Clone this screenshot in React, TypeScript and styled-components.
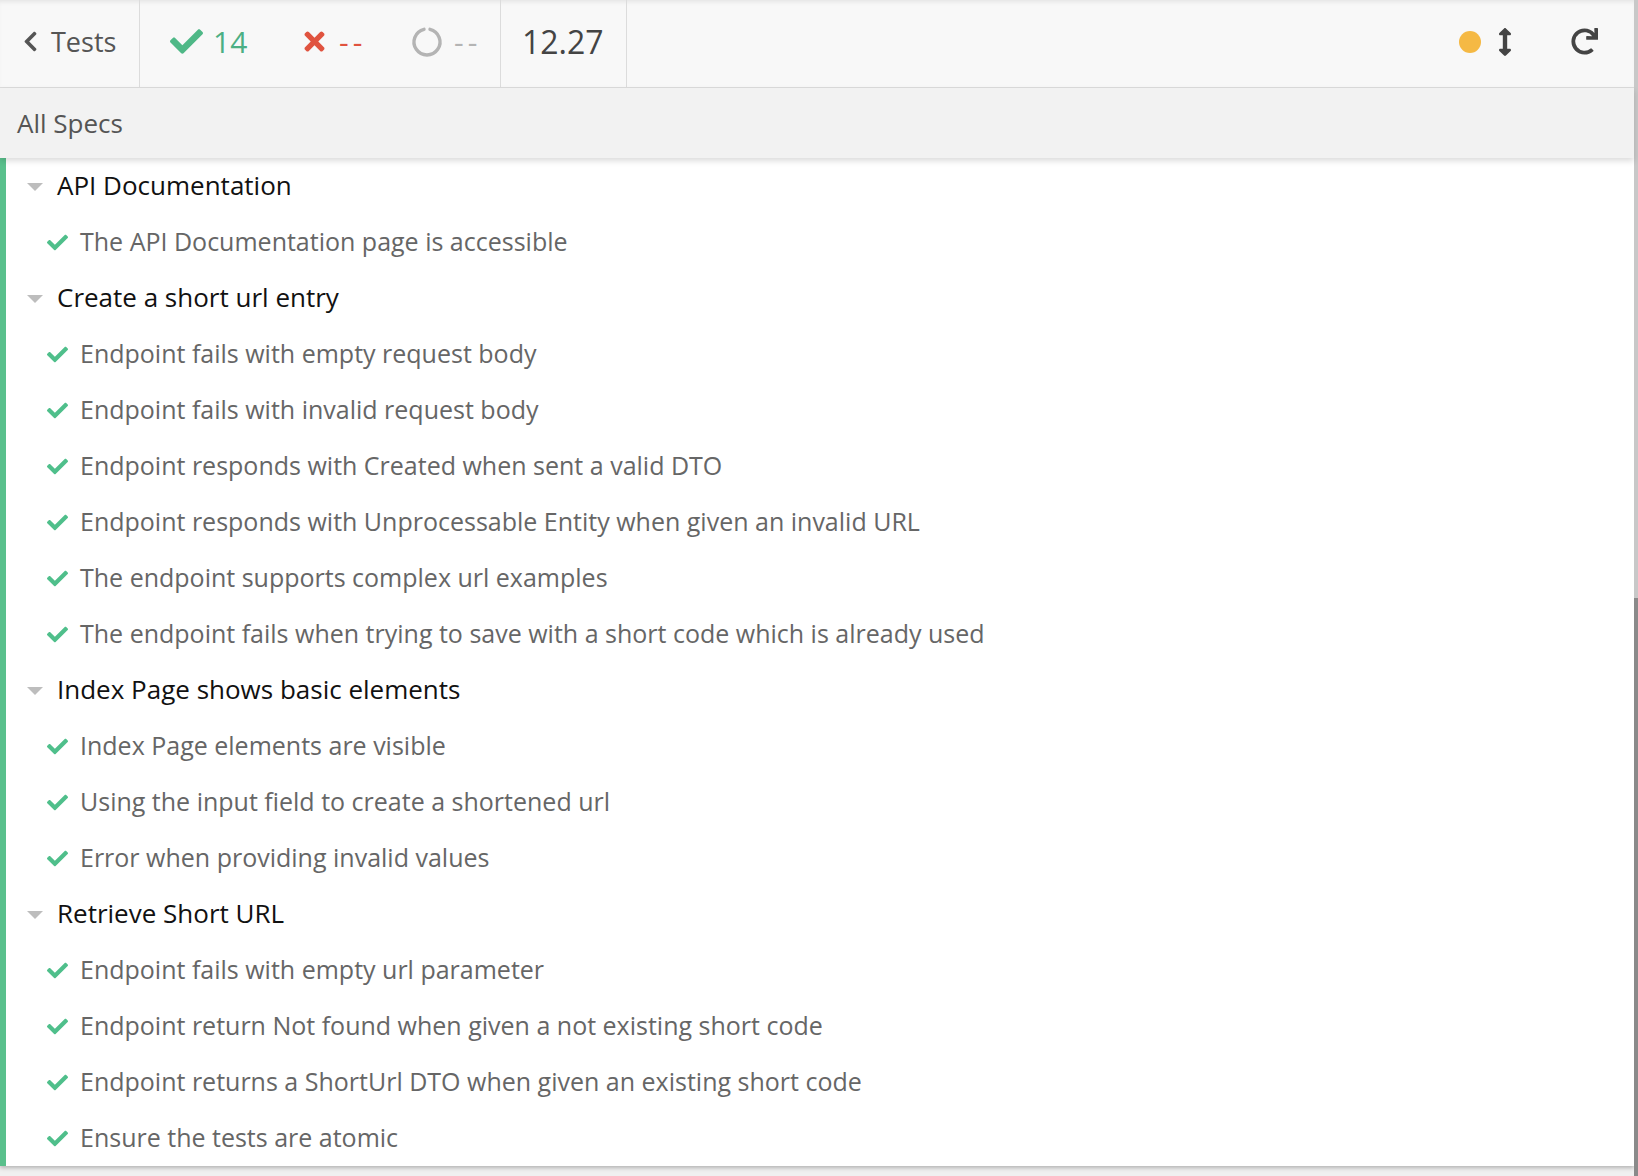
import React from "react";
import styled, { createGlobalStyle } from "styled-components";
import { FaCheck, FaTimes, FaChevronLeft, FaArrowsAltV, FaRedo } from "react-icons/fa";

const GlobalStyle = createGlobalStyle`
  html, body {
    margin: 0;
    padding: 0;
    background: #f0f0f0;
    font-family: "Open Sans", Lato, sans-serif;
  }
`;

const Page = styled.div`
  display: flex;
  height: 1176px;
  overflow: hidden;
`;

const Main = styled.div`
  flex: 1;
  display: flex;
  flex-direction: column;
`;

const ScrollTrack = styled.div`
  width: 4px;
  display: flex;
  flex-direction: column;
  background: #c8c8c8;
`;

const ScrollThumb = styled.div`
  margin-top: 598px;
  flex: 1;
  background: #8a8a8a;
`;

const Header = styled.header`
  height: 88px;
  box-sizing: border-box;
  padding-bottom: 4px;
  display: flex;
  align-items: stretch;
  background: #f8f8f8;
  border-bottom: 1px solid #dcdcdc;
  box-shadow: inset 0 4px 4px -2px rgba(0, 0, 0, 0.08);
`;

const Section = styled.div<{ $width: number; $pad?: number }>`
  width: ${(p) => p.$width}px;
  padding-left: ${(p) => p.$pad ?? 0}px;
  box-sizing: border-box;
  display: flex;
  align-items: center;
  border-right: 1px solid #dcdcdc;
  margin-bottom: -4px;
  padding-bottom: 4px;
`;

const BackLink = styled.div`
  display: flex;
  align-items: center;
  gap: 9px;
  color: #555;
  font-size: 27px;
`;

const Stat = styled.div<{ $color: string; $width: number }>`
  display: flex;
  align-items: center;
  gap: 10px;
  width: ${(p) => p.$width}px;
  color: ${(p) => p.$color};
  font-size: 30px;
`;

const Dashes = styled.span`
  letter-spacing: 4px;
`;

const Duration = styled.div`
  font-size: 32px;
  color: #444;
  padding-left: 21px;
`;

const Spacer = styled.div`
  flex: 1;
`;

const Controls = styled.div`
  display: flex;
  align-items: center;
  padding-right: 36px;
  color: #444;
`;

const Dot = styled.span`
  width: 22px;
  height: 22px;
  border-radius: 50%;
  background: #f5b944;
  margin-right: 10px;
`;

const IconButton = styled.span<{ $gap?: number }>`
  display: flex;
  margin-right: ${(p) => p.$gap ?? 0}px;
`;

const SpecBar = styled.div`
  height: 70px;
  display: flex;
  align-items: center;
  padding-left: 17px;
  background: #f2f2f2;
  color: #555;
  font-size: 26px;
  position: relative;
  z-index: 1;
  box-shadow: 0 3px 6px rgba(0, 0, 0, 0.14);
`;

const List = styled.div`
  background: #fff;
  border-left: 6px solid #59c08c;
  box-shadow: 0 2px 4px rgba(0, 0, 0, 0.25);
`;

const Row = styled.div<{ $suite?: boolean }>`
  height: 56px;
  display: flex;
  align-items: center;
  padding-left: ${(p) => (p.$suite ? 21 : 41)}px;
  font-size: ${(p) => (p.$suite ? 26 : 25)}px;
  color: ${(p) => (p.$suite ? "#111" : "#666")};
  padding-bottom: 3px;
  box-sizing: border-box;
`;

const Caret = styled.span`
  width: 0;
  height: 0;
  border-left: 8px solid transparent;
  border-right: 8px solid transparent;
  border-top: 8px solid #bdbdbd;
  margin-right: 14px;
  margin-top: 4px;
`;

const PassIcon = styled(FaCheck)`
  color: #4fbf8b;
  font-size: 21px;
  margin-right: 12px;
  margin-top: 3px;
`;

const Pending = () => (
  <svg width="34" height="34" viewBox="0 0 34 34">
    <path
      d="M20 4.3 A13 13 0 1 1 14 4.3"
      fill="none"
      stroke="#b4b4b4"
      strokeWidth="3.4"
      strokeLinecap="round"
    />
  </svg>
);

const suites = [
  {
    title: "API Documentation",
    tests: ["The API Documentation page is accessible"],
  },
  {
    title: "Create a short url entry",
    tests: [
      "Endpoint fails with empty request body",
      "Endpoint fails with invalid request body",
      "Endpoint responds with Created when sent a valid DTO",
      "Endpoint responds with Unprocessable Entity when given an invalid URL",
      "The endpoint supports complex url examples",
      "The endpoint fails when trying to save with a short code which is already used",
    ],
  },
  {
    title: "Index Page shows basic elements",
    tests: [
      "Index Page elements are visible",
      "Using the input field to create a shortened url",
      "Error when providing invalid values",
    ],
  },
  {
    title: "Retrieve Short URL",
    tests: [
      "Endpoint fails with empty url parameter",
      "Endpoint return Not found when given a not existing short code",
      "Endpoint returns a ShortUrl DTO when given an existing short code",
      "Ensure the tests are atomic",
    ],
  },
];

const App = () => {
  return (
    <>
      <GlobalStyle />
      <Page>
        <Main>
          <Header>
            <Section $width={140} $pad={19}>
              <BackLink>
                <FaChevronLeft size={23} />
                Tests
              </BackLink>
            </Section>
            <Section $width={361} $pad={30}>
              <Stat $color="#4caf84" $width={130}>
                <FaCheck size={33} color="#4fb887" />
                14
              </Stat>
              <Stat $color="#e0533f" $width={110}>
                <FaTimes size={29} />
                <Dashes>--</Dashes>
              </Stat>
              <Stat $color="#b4b4b4" $width={90}>
                <Pending />
                <Dashes>--</Dashes>
              </Stat>
            </Section>
            <Section $width={126}>
              <Duration>12.27</Duration>
            </Section>
            <Spacer />
            <Controls>
              <Dot />
              <IconButton $gap={52}>
                <FaArrowsAltV size={28} />
              </IconButton>
              <IconButton>
                <FaRedo size={27} />
              </IconButton>
            </Controls>
          </Header>
          <SpecBar>All Specs</SpecBar>
          <List>
            {suites.map((suite) => (
              <React.Fragment key={suite.title}>
                <Row $suite>
                  <Caret />
                  {suite.title}
                </Row>
                {suite.tests.map((test) => (
                  <Row key={test}>
                    <PassIcon />
                    {test}
                  </Row>
                ))}
              </React.Fragment>
            ))}
          </List>
        </Main>
        <ScrollTrack>
          <ScrollThumb />
        </ScrollTrack>
      </Page>
    </>
  );
};

export default App;
